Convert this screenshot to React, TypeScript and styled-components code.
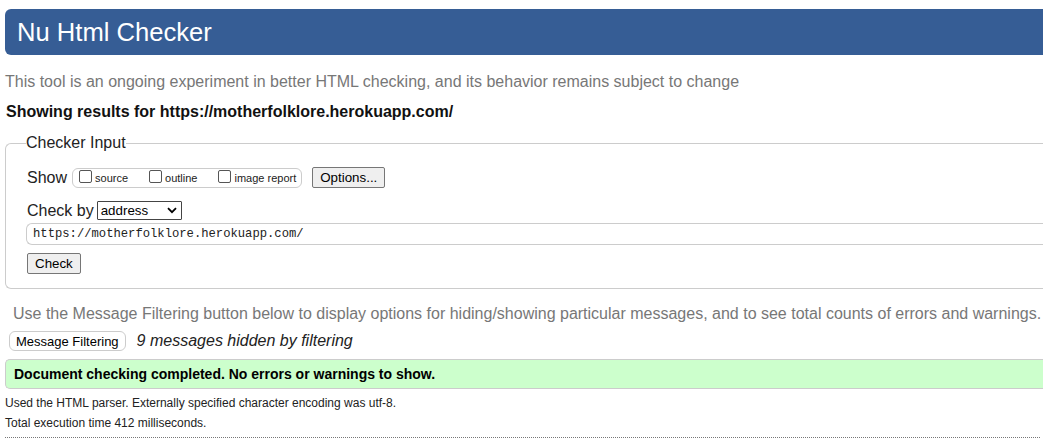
import React from "react";
import styled, { createGlobalStyle } from "styled-components";

const Global = createGlobalStyle`
  html, body { margin: 0; padding: 0; background: #fff; overflow: hidden; }
  body { font-family: "Liberation Sans", Arial, sans-serif; color: #000; }
`;

const Page = styled.div`
  width: 1100px;
  padding: 9px 0 0 5px;
  display: flex;
  flex-direction: column;
`;

const Header = styled.h1`
  margin: 0;
  height: 46px;
  background: #365d95;
  color: #fff;
  border-radius: 6px 0 0 6px;
  font-size: 25.6px;
  font-weight: normal;
  display: flex;
  align-items: center;
  padding-left: 12px;
  box-sizing: border-box;
`;

const Intro = styled.p`
  margin: 18px 0 0 0;
  font-size: 16px;
  color: #777;
  line-height: 18px;
`;

const Showing = styled.p`
  margin: 12px 0 0 1px;
  font-size: 16px;
  font-weight: bold;
  color: #111;
  line-height: 18px;
`;

const Fieldset = styled.fieldset`
  margin: 13px 0 0 0;
  border: 1px solid #ccc;
  border-right: none;
  border-radius: 6px 0 0 6px;
  padding: 4px 0 14px 21px;
  display: flex;
  flex-direction: column;
`;

const Legend = styled.legend`
  font-size: 16px;
  color: #222;
  padding: 0;
  margin-left: -1px;
`;

const Row = styled.div<{ gap?: number; mt?: number }>`
  display: flex;
  align-items: center;
  gap: ${(p) => p.gap ?? 4}px;
  margin-top: ${(p) => p.mt ?? 0}px;
`;

const Label = styled.span`
  font-size: 16px;
  color: #222;
`;

const ShowBox = styled.div`
  display: flex;
  align-items: center;
  height: 18px;
  border: 1px solid #ccc;
  border-radius: 6px;
  padding: 0 5px 0 6px;
  margin-left: 1px;
`;

const CheckItem = styled.label<{ mr?: number }>`
  display: flex;
  align-items: center;
  font-size: 11px;
  color: #222;
  margin-right: ${(p) => p.mr ?? 0}px;
`;

const Box = styled.span`
  width: 11px;
  height: 11px;
  border: 1px solid #555;
  border-radius: 2px;
  margin: 0 3px 2px 0;
  background: #fff;
`;

const Btn = styled.button<{ ml?: number }>`
  font-family: "Liberation Sans", Arial, sans-serif;
  font-size: 13.33px;
  color: #000;
  background: #efefef;
  border: 1px solid #767676;
  border-radius: 2px;
  padding: 0 7px;
  height: 21px;
  line-height: 19px;
  margin: 0 0 0 ${(p) => p.ml ?? 0}px;
`;

const RoundBtn = styled(Btn)`
  background: #fff;
  border-color: #ccc;
  border-radius: 6px;
  height: 20px;
  padding: 0 6px;
  font-size: 13px;
`;

const Select = styled.div`
  width: 85px;
  height: 19px;
  box-sizing: border-box;
  border: 1px solid #444;
  border-radius: 1px;
  display: flex;
  align-items: center;
  justify-content: space-between;
  padding: 0 4px 0 3px;
  font-size: 13.33px;
  color: #000;
`;

const UrlInput = styled.div`
  height: 22px;
  box-sizing: border-box;
  border: 1px solid #ccc;
  border-right: none;
  border-radius: 6px 0 0 6px;
  display: flex;
  align-items: center;
  padding-left: 6px;
  font-family: "Liberation Mono", "DejaVu Sans Mono", monospace;
  font-size: 12.2px;
  color: #222;
  margin: 3px 0 0 -1px;
`;

const Note = styled.p`
  margin: 16px 0 0 8px;
  font-size: 16px;
  color: #777;
  line-height: 18px;
`;

const Hidden = styled.em`
  font-size: 16px;
  color: #222;
`;

const Success = styled.div`
  margin-top: 8px;
  height: 30px;
  box-sizing: border-box;
  background: #ccffcc;
  border: 1px solid #ccc;
  border-right: none;
  border-radius: 5px 0 0 5px;
  display: flex;
  align-items: center;
  padding-left: 8px;
  font-size: 14px;
  font-weight: bold;
  color: #000;
`;

const Small = styled.p<{ mt?: number }>`
  margin: ${(p) => p.mt ?? 0}px 0 0 0;
  font-size: 12px;
  color: #222;
  line-height: 14px;
`;

const Dotted = styled.hr`
  margin: 7px 0 0 0;
  width: 1035px;
  border: none;
  border-top: 1px dotted #777;
  height: 0;
`;

const Chevron = () => (
  <svg width="10" height="7" viewBox="0 0 10 7">
    <path d="M1 1.2 L5 5.2 L9 1.2" fill="none" stroke="#000" strokeWidth="1.8" />
  </svg>
);

export default function App() {
  return (
    <>
      <Global />
      <Page>
        <Header>Nu Html Checker</Header>
        <Intro>This tool is an ongoing experiment in better HTML checking, and its behavior remains subject to change</Intro>
        <Showing>Showing results for https://motherfolklore.herokuapp.com/</Showing>
        <Fieldset>
          <Legend>Checker Input</Legend>
          <Row gap={4} mt={11}>
            <Label>Show</Label>
            <ShowBox>
              <CheckItem mr={21}><Box />source</CheckItem>
              <CheckItem mr={21}><Box />outline</CheckItem>
              <CheckItem><Box />image report</CheckItem>
            </ShowBox>
            <Btn ml={6}>Options...</Btn>
          </Row>
          <Row gap={3} mt={13}>
            <Label>Check by</Label>
            <Select>address<Chevron /></Select>
          </Row>
          <UrlInput>https://motherfolklore.herokuapp.com/</UrlInput>
          <Row mt={8}>
            <Btn>Check</Btn>
          </Row>
        </Fieldset>
        <Note>Use the Message Filtering button below to display options for hiding/showing particular messages, and to see total counts of errors and warnings.</Note>
        <Row gap={11} mt={8}>
          <RoundBtn ml={4}>Message Filtering</RoundBtn>
          <Hidden>9 messages hidden by filtering</Hidden>
        </Row>
        <Success>Document checking completed. No errors or warnings to show.</Success>
        <Small mt={7}>Used the HTML parser. Externally specified character encoding was utf-8.</Small>
        <Small mt={6}>Total execution time 412 milliseconds.</Small>
        <Dotted />
      </Page>
    </>
  );
}
